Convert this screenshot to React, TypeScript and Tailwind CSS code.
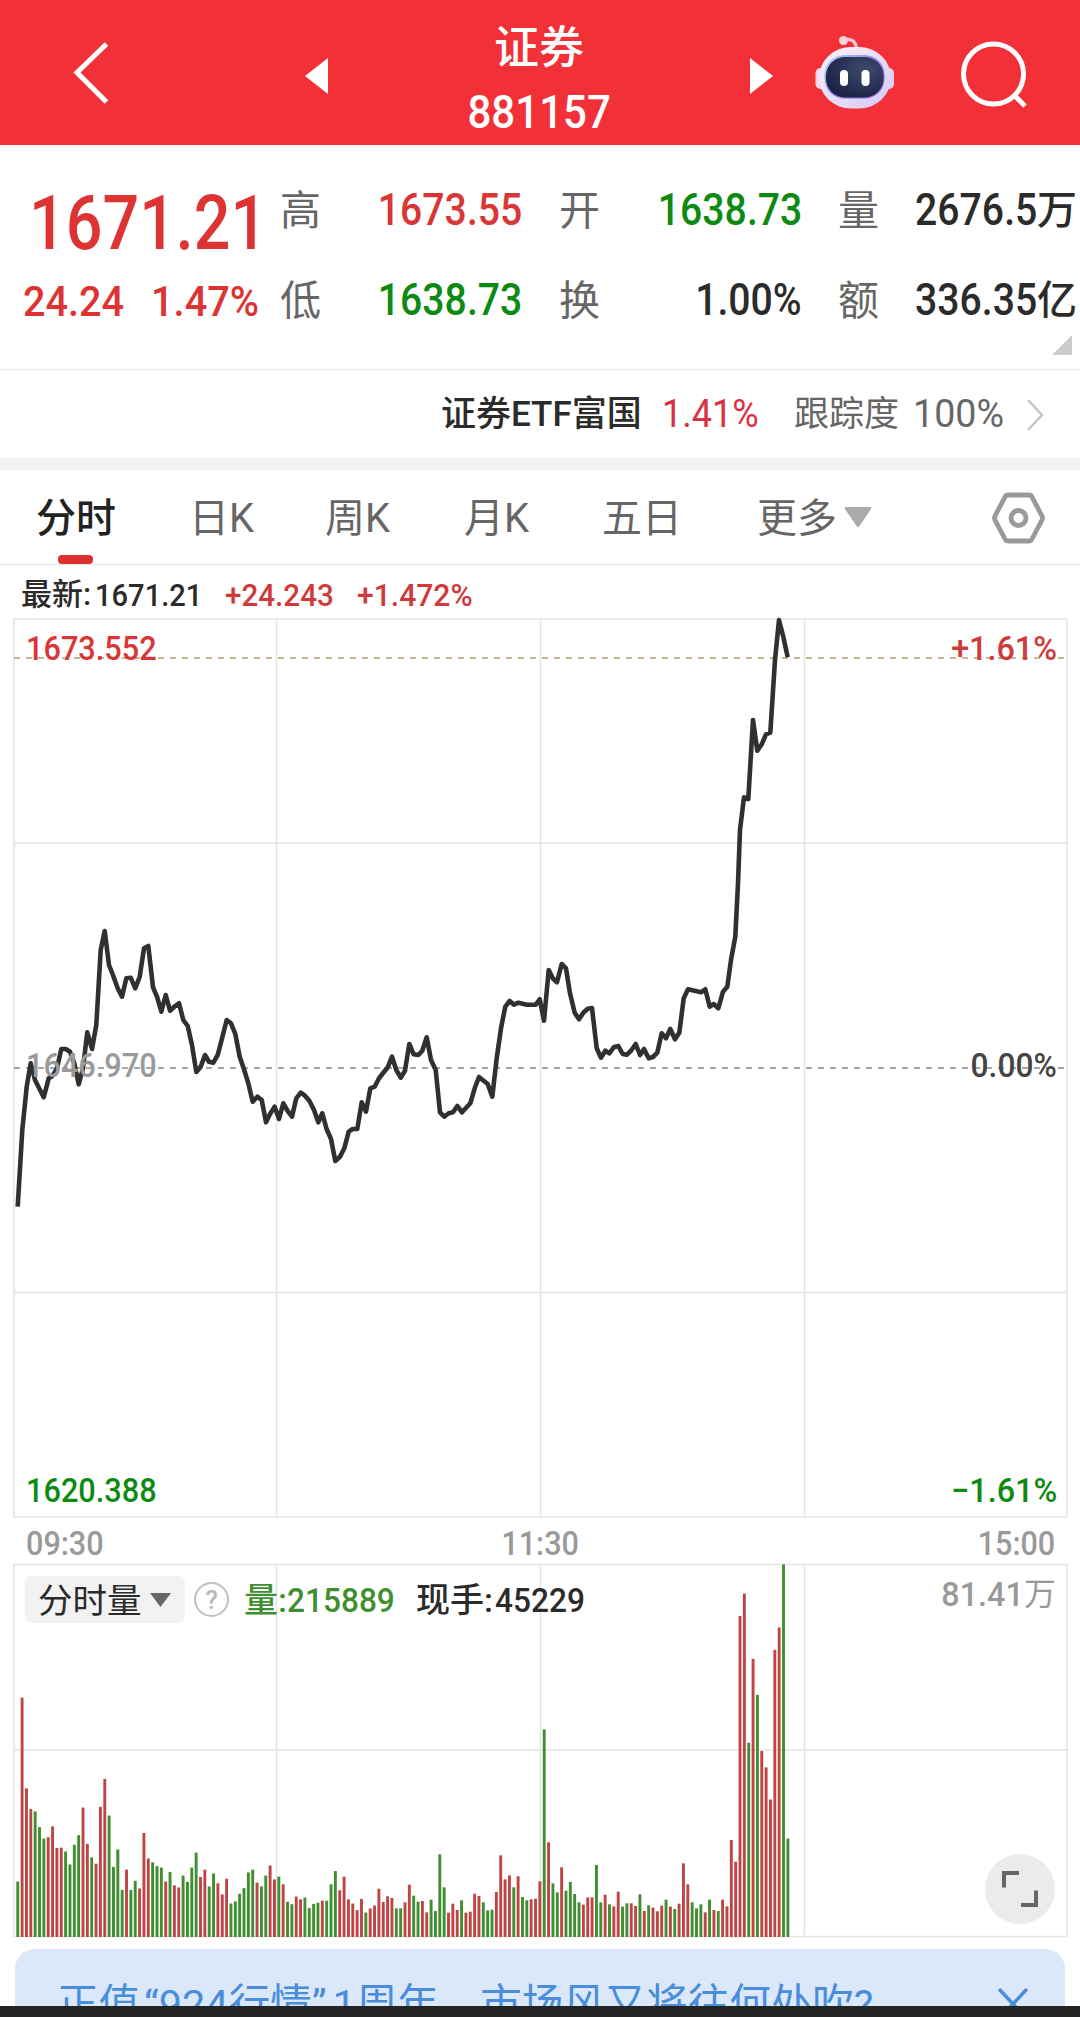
import type { ReactNode } from 'react';

const PRICE_POINTS =
  '17.7,1206.7 22.3,1130 26.7,1086.7 30.7,1063.3 35,1080 43.7,1097.3 48.7,1078.3 52.7,1075.7 57,1068.3 61.3,1049 65.7,1049 70,1051.7 74.3,1063.3 78.7,1084.3 83,1068.3 87.3,1032.3 92,1049 96.3,1025 100.7,950 104.7,931 109,965 113.3,976 117.7,988.3 122,996.7 126.3,978.3 130.7,977.7 135.3,988.3 139.7,976.7 144,948.3 148.3,946 153,987.3 157,996.7 161.3,1011.7 165.7,995 170,1010.7 174.3,1006.7 179,1003.3 183.3,1020 187.7,1026 192,1045 196.3,1072 200.7,1066.7 205,1055 209,1061.7 213.3,1062.7 217.7,1055 222.3,1037.3 226.7,1020 231,1023.3 235.3,1034 239.7,1056.7 244,1069.3 248.3,1083.3 252.7,1101.7 257.3,1096.7 261.7,1100 266,1122.3 270,1114 274.7,1106.7 279,1119 283.3,1103.3 287.7,1111 292,1116.7 296.3,1098.3 300.7,1092.7 305,1095.7 309.3,1100.7 314,1110 318.3,1122.3 322.3,1113.3 326.7,1129.3 331,1139 335.3,1161 340,1156.7 344.3,1148.3 348.7,1131.7 352.7,1129 357.3,1129 361.7,1102.3 366,1111.7 370.3,1088.3 374.7,1086.7 379,1078.3 387.7,1067.3 392,1056.7 396.3,1070 400.7,1077.7 405,1070.7 409.3,1044 413.7,1054.3 418.3,1055 422.3,1050.7 426.7,1037.3 431,1060 435.7,1070 440,1112.3 444.3,1116.7 448.7,1113.3 453,1112.3 457.3,1106 462,1112.3 470.3,1103.3 474.7,1088.3 479,1077 487.7,1084 492.3,1096.7 496.7,1058.3 501,1028.3 505.3,1006.7 509.7,1001 514,1004.7 518.3,1002.7 526.7,1004.7 535.7,1004.7 539.7,999.3 544,1020.7 548.7,970 552.7,978.3 557,982.3 561.7,964 566,968.3 570,993.3 574.7,1012.7 579,1019.3 583.3,1012.7 587.7,1008.7 592,1008 596.7,1048.3 601,1057.7 605.3,1050.7 609.3,1053.3 613.7,1047.3 618.3,1046 622.7,1054 626.7,1054.7 631,1050.7 635.7,1044 640,1055 644,1049 648.7,1058.3 653,1057 657.3,1052.7 661.7,1033.3 666,1038.3 670.3,1029 675,1039.3 679.3,1032.7 683.7,998.3 688,989.3 696.7,991.3 701,992.3 705.3,989.3 709.7,1006.7 713.7,1004 718.3,1008.3 723,991.7 727.3,986.7 731,960 735.3,936.7 738,883.3 740,830 744,797.3 748.3,799 753,720 757.3,750.7 761.7,744.3 766,734.3 770.3,732.7 775,660 779,620 783.3,636.7 787.7,657.3';

const VOLUME_RUNS = [
  {
    unit: 2.866,
    bars: 'g159 r686 r426 r367 g360 g315 g282 r286 r317 r255 r256 g245 g208 g264 g292 r371 r267 g228 r210 r373 r453 g348 g201 g251 g135 r193 g135 g161 r139 r298 r225 g214 g203 g199 r159 g186 r148 r142 g176 g158 g199 g242 r172 r193 g145 g182 r154 r122 r167 g96 g102 g124 g140 g185 g193 r156 g145 g176 r205 r165 g173 r151 g101 g94 r116 r108 g113 g83 g95 g98 r104 g104 g151 g189 r134 r173 r108 r96 r77 r109 g70 r82 r90 r138',
  },
  {
    unit: 3,
    bars: 'r105 r122 r117 g86 g86 r104 r157 g124 g106 r108 r74 g112 g78 g248 g149 r73 r100 r81 g110 r73 r76 r130 r123 g104 g80 g82 r135 r245 r173 r185 g149 r182 g120 g110 r113 r115 r167 g623 r284 g161 g134 r209 g139 g165 g129 g104 r97 r119 r119 g216 g104 r127 g98 r92 r136 g91 g101 r101 r93 g128 r78 g95 r88 r77 r94 g112 r91 g84 r100 r221 r158 g104 g86 g98 r74 g112 r81 g78 r112 r92 r291 r226',
  },
  {
    unit: 2.866,
    bars: 'r920 r984 g557 r797 g694 r533 r486 r394 r823 r887 g1068 g282',
  },
];

const BARS = VOLUME_RUNS.flatMap(({ unit, bars }) =>
  bars.split(' ').map((b) => ({ up: b[0] === 'r', height: Number(b.slice(1)) / unit })),
);

/* Condensed figures, anchored to one edge of their box */
function Num({ children, className = '' }: { children: ReactNode; className?: string }) {
  return <span className={`inline-block whitespace-nowrap ${className}`}>{children}</span>;
}

function Robot() {
  return (
    <svg className="h-[76px] w-[80px]" viewBox="0 0 80 76">
      <defs>
        <linearGradient id="shell" x1="0" y1="0" x2="1" y2="1">
          <stop offset="0" stopColor="#fff0f6" />
          <stop offset="0.55" stopColor="#e6dcf8" />
          <stop offset="1" stopColor="#d3c8f6" />
        </linearGradient>
        <linearGradient id="rim" x1="0" y1="0" x2="1" y2="1">
          <stop offset="0" stopColor="#a9dcf2" />
          <stop offset="0.5" stopColor="#8b7fe6" />
          <stop offset="1" stopColor="#8e5be0" />
        </linearGradient>
        <radialGradient id="visor" cx="0.68" cy="0.3" r="0.7">
          <stop offset="0" stopColor="#3f4a6d" />
          <stop offset="1" stopColor="#1d2547" />
        </radialGradient>
      </defs>
      <path d="M29 5 Q41 2 41.500 15" fill="none" stroke="#f8c6d6" strokeWidth="3.500" />
      <circle cx="28.500" cy="5.500" r="4.500" fill="#fbd3df" />
      <rect x="0.500" y="33" width="11" height="21" rx="5" fill="#f3d9ea" />
      <rect x="68" y="33" width="11" height="21" rx="5" fill="#dcd0f7" />
      <rect x="4" y="12" width="72" height="61.500" rx="32" fill="url(#shell)" />
      <rect x="9.500" y="20" width="60" height="43.500" rx="20" fill="url(#rim)" />
      <rect x="11" y="22" width="57.500" height="40.500" rx="19" fill="url(#visor)" />
      <rect x="25" y="35" width="8" height="16" rx="4" fill="#fff" />
      <rect x="46.500" y="35" width="8" height="16" rx="4" fill="#fff" />
    </svg>
  );
}

function Header() {
  return (
    <header className="flex h-[145px] w-full items-start bg-[#f13037] text-white">
      <svg className="ml-[70px] mt-[38px] h-[70px] w-[42px] shrink-0" viewBox="0 0 42 70" fill="none" stroke="#fff" strokeWidth="5">
        <path d="M36.500 6 L7 34.500 L36.500 64" />
      </svg>
      <svg className="ml-[193px] mt-[58px] h-[36px] w-[23px] shrink-0" viewBox="0 0 23 36">
        <path d="M23 0 V36 L0 18 Z" fill="#fff" />
      </svg>
      <div className="flex w-[422px] shrink-0 flex-col items-center">
        <div className="mt-[26px] text-[45px] font-medium leading-[45px]">证券</div>
        <Num className="mt-[17px] scale-x-[0.895] text-[47px] font-medium leading-[47px]">881157</Num>
      </div>
      <svg className="mt-[58px] h-[36px] w-[23px] shrink-0" viewBox="0 0 23 36">
        <path d="M0 0 L23 18 L0 36 Z" fill="#fff" />
      </svg>
      <div className="ml-[42px] mt-[35px] shrink-0">
        <Robot />
      </div>
      <svg className="ml-[62px] mt-[38px] h-[74px] w-[74px] shrink-0" viewBox="0 0 74 74" fill="none" stroke="#fff" strokeWidth="5">
        <circle cx="36.500" cy="36" r="30" />
        <path d="M57 57 L68 68" />
      </svg>
    </header>
  );
}

function Quote() {
  const label = 'text-[41px] leading-[48px] text-[#666] pt-[2px] whitespace-nowrap';
  const value = 'scale-x-[0.89] origin-right text-[44px] font-medium leading-[50px]';
  return (
    <section className="relative flex h-[225px] w-full border-b border-[#e9e9e9]">
      <div className="w-[280px] shrink-0 text-[#dd3333]">
        <Num className="ml-[29px] mt-[40px] origin-left scale-x-[0.85] text-[76px] font-medium leading-[76px]">1671.21</Num>
        <div className="flex pt-[16px]">
          <Num className="ml-[23px] w-[128px] origin-left scale-x-[0.92] text-[43px] font-medium leading-[48px]">24.24</Num>
          <Num className="origin-left scale-x-[0.925] text-[43px] font-medium leading-[48px]">1.47%</Num>
        </div>
      </div>
      <div className="grid h-[180px] w-[800px] shrink-0 grid-cols-[41px_201px_78px_202px_77px_198px] grid-rows-[90px_90px] pt-[40px]">
        <div className={label}>高</div>
        <div className="text-right text-[#d93636]"><Num className={value}>1673.55</Num></div>
        <div className={`${label} text-right`}>开</div>
        <div className="text-right text-[#0d8a12]"><Num className={value}>1638.73</Num></div>
        <div className={`${label} text-right`}>量</div>
        <div className="flex justify-end whitespace-nowrap text-[#2b2b2b]">
          <Num className={value}>2676.5</Num>
          <span className="text-[40px] font-medium leading-[52px]">万</span>
        </div>
        <div className={label}>低</div>
        <div className="text-right text-[#0d8a12]"><Num className={value}>1638.73</Num></div>
        <div className={`${label} text-right`}>换</div>
        <div className="text-right text-[#2b2b2b]"><Num className={value}>1.00%</Num></div>
        <div className={`${label} text-right`}>额</div>
        <div className="flex justify-end whitespace-nowrap text-[#2b2b2b]">
          <Num className={value}>336.35</Num>
          <span className="text-[40px] font-medium leading-[52px]">亿</span>
        </div>
      </div>
      <svg className="absolute bottom-[14px] right-[8px] h-[20px] w-[20px]" viewBox="0 0 20 20">
        <path d="M20 0 V20 H0 Z" fill="#ccc" />
      </svg>
    </section>
  );
}

function EtfRow() {
  return (
    <section className="flex h-[88px] w-full items-center pt-[2px] text-[35px] leading-[40px] text-[#666]">
      <span className="ml-[441px] w-[221px] whitespace-nowrap font-medium text-[#2b2b2b]">证券ETF富国</span>
      <span className="w-[132px]"><Num className="origin-left scale-x-[0.925] text-[39px] text-[#dc2f42]">1.41%</Num></span>
      <span className="w-[119px] whitespace-nowrap">跟踪度</span>
      <span className="w-[113px]"><Num className="origin-left scale-x-[0.965] text-[39px]">100%</Num></span>
      <svg className="h-[34px] w-[18px]" viewBox="0 0 18 34" fill="none" stroke="#c4c4c4" strokeWidth="2.500">
        <path d="M2 2 L16 17 L2 32" />
      </svg>
    </section>
  );
}

function Tabs() {
  return (
    <nav className="relative flex h-[95px] w-full items-center whitespace-nowrap border-b border-[#e2e2e2] text-[40px] leading-[48px] text-[#666]">
      <span className="ml-[36px] w-[153px] pt-[4px] font-medium text-[#222]">分时</span>
      <span className="w-[136px] pt-[4px]">日K</span>
      <span className="w-[139px] pt-[4px]">周K</span>
      <span className="w-[138px] pt-[4px]">月K</span>
      <span className="w-[155px] pt-[4px]">五日</span>
      <span className="w-[87px] pt-[4px]">更多</span>
      <svg className="h-[22px] w-[28px]" viewBox="0 0 28 22">
        <path d="M2 1 H26 Q28 1 27 3 L15.500 20 Q14 22 12.500 20 L1 3 Q0 1 2 1 Z" fill="#aaa" />
      </svg>
      <svg className="ml-[118px] mt-[2px] h-[54px] w-[58px]" viewBox="0 0 58 54" fill="none" stroke="#999" strokeWidth="4.800" strokeLinejoin="round">
        <path d="M18 4 H39 Q41 4 42 6 L52 25 Q53 27 52 29 L42 48 Q41 50 39 50 H18 Q16 50 15 48 L5 29 Q4 27 5 25 L15 6 Q16 4 18 4 Z" />
        <circle cx="28.500" cy="27" r="7.500" />
      </svg>
      <div className="absolute bottom-0 left-[58px] h-[9px] w-[35px] rounded-[4px] bg-[#dd3030]" />
    </nav>
  );
}

function PriceChart() {
  const tag = 'absolute text-[33px] font-medium leading-[34px]';
  return (
    <section className="relative h-[952px] w-full">
      <div className="flex h-[54px] items-center pt-[5px] text-[32px] font-medium leading-[34px] text-[#2b2b2b]">
        <span className="ml-[21px] w-[74px] whitespace-nowrap text-[31px]">最新:</span>
        <span className="w-[130px]"><Num className="origin-left scale-x-[0.91]">1671.21</Num></span>
        <span className="w-[132px]"><Num className="origin-left scale-x-[0.925] text-[#d03a3a]">+24.243</Num></span>
        <Num className="origin-left scale-x-[0.94] text-[#d03a3a]">+1.472%</Num>
      </div>
      <svg className="block h-[898px] w-full overflow-visible" viewBox="0 619 1080 898" fill="none">
        <g stroke="#e4e4e4" strokeWidth="1.500">
          <rect x="14" y="619" width="1053" height="898" />
          <path d="M276.500 619 V1517 M540.500 619 V1517 M804.500 619 V1517 M14 843 H1067 M14 1292.500 H1067" />
        </g>
        <path d="M14 1068 H1064" stroke="#8a8a8a" strokeWidth="1.700" strokeDasharray="6 6" />
        <path d="M14 658 H1064" stroke="#b3a368" strokeWidth="1.700" strokeDasharray="6 6" />
        <polyline points={PRICE_POINTS} stroke="#303030" strokeWidth="4.600" strokeLinejoin="round" />
      </svg>
      <Num className={`${tag} left-[26px] top-[67px] origin-left scale-x-[0.93] text-[#d93636]`}>1673.552</Num>
      <Num className={`${tag} right-[23px] top-[67px] origin-right scale-x-[0.98] text-[#d03a3a]`}>+1.61%</Num>
      <Num className={`${tag} left-[26px] top-[484px] origin-left scale-x-[0.93] text-[#999]`}>1646.970</Num>
      <Num className={`${tag} right-[23px] top-[484px] origin-right scale-x-[0.96] text-[#444]`}>0.00%</Num>
      <Num className={`${tag} left-[26px] top-[909px] origin-left scale-x-[0.93] text-[#0d8a12]`}>1620.388</Num>
      <Num className={`${tag} right-[23px] top-[909px] origin-right scale-x-[0.98] text-[#0d8a12]`}>−1.61%</Num>
    </section>
  );
}

function TimeAxis() {
  return (
    <div className="flex h-[47px] items-center justify-between pl-[26px] pr-[25px] pt-[5px] text-[34px] font-medium leading-[34px] text-[#999]">
      <Num className="origin-left scale-x-[0.9]">09:30</Num>
      <Num className="scale-x-[0.9]">11:30</Num>
      <Num className="origin-right scale-x-[0.9]">15:00</Num>
    </div>
  );
}

function VolumeChart() {
  return (
    <section className="relative h-[373px] w-full">
      <svg className="block h-[373px] w-full overflow-visible" viewBox="0 1564 1080 373" fill="none">
        <g stroke="#e4e4e4" strokeWidth="1.500">
          <rect x="14" y="1564.500" width="1053" height="372" />
          <path d="M276.500 1564 V1936 M540.500 1564 V1936 M804.500 1564 V1936 M14 1750 H1067" />
        </g>
        {BARS.map((bar, i) => (
          <rect key={i} x={16.3 + i * 4.351} y={1937 - bar.height} width="2.900" height={bar.height} fill={bar.up ? '#bf4545' : '#3f8f30'} />
        ))}
      </svg>
      <div className="absolute left-[25px] top-[12px] flex h-[47px] items-center text-[34px] leading-[36px]">
        <div className="flex h-[47px] w-[160px] shrink-0 items-center rounded-[6px] bg-[#f2f2f2] pl-[13px] text-[#2b2b2b]">
          <span className="w-[112px] whitespace-nowrap pt-[2px] text-[34.5px]">分时量</span>
          <svg className="h-[14px] w-[21px]" viewBox="0 0 21 14"><path d="M0 0 H21 L10.500 14 Z" fill="#666" /></svg>
        </div>
        <div className="ml-[9px] flex h-[35px] w-[35px] shrink-0 items-center justify-center rounded-full border-[2.5px] border-[#c0c0c0] text-[26px] font-medium leading-[26px] text-[#b8b8b8]">?</div>
        <span className="ml-[15px] w-[43px] shrink-0 whitespace-nowrap font-medium text-[#3f8f30]">量:</span>
        <span className="w-[129px] shrink-0"><Num className="origin-left scale-x-[0.93] text-[34px] font-medium text-[#3f8f30]">215889</Num></span>
        <span className="w-[79px] shrink-0 whitespace-nowrap font-medium text-[#2b2b2b]">现手:</span>
        <Num className="origin-left scale-x-[0.93] text-[34px] font-medium text-[#2b2b2b]">45229</Num>
      </div>
      <div className="absolute right-[24px] top-[12px] flex text-[34px] leading-[36px] text-[#999]">
        <Num className="origin-right scale-x-[0.95] font-medium">81.41</Num>
        <span className="text-[32px]">万</span>
      </div>
      <div className="absolute left-[985px] top-[290px] flex h-[70px] w-[70px] items-center justify-center rounded-full bg-[#ebebeb]">
        <svg className="h-[36px] w-[36px]" viewBox="0 0 36 36" fill="none" stroke="#666" strokeWidth="4">
          <path d="M2 16.500 V2 H17 M34 19.500 V34 H19" />
        </svg>
      </div>
    </section>
  );
}

function Banner() {
  return (
    <div className="mt-[12px] flex h-[57px] w-full overflow-hidden px-[15px]">
      <div className="flex h-[100px] w-[1050px] rounded-t-[20px] bg-[#dbe8fa] pt-[33px] text-[41.5px] leading-[46px] text-[#4a8ddb]">
        <div className="ml-[42px] w-[941px] whitespace-nowrap">
          正值<span className="ml-[4px] mr-[6px]">“924行情”</span>1周年，市场风又将往何处吹?
        </div>
        <svg className="mt-[6px] h-[32px] w-[30px]" viewBox="0 0 30 32" fill="none" stroke="#4a8ddb" strokeWidth="3.500">
          <path d="M1 1 L29 31 M29 1 L1 31" />
        </svg>
      </div>
    </div>
  );
}

export default function App() {
  return (
    <main className="flex h-[2017px] w-[1080px] flex-col overflow-hidden bg-white font-['Roboto','Noto_Sans_CJK_SC',sans-serif]" lang="zh-CN">
      <Header />
      <Quote />
      <EtfRow />
      <div className="h-[12px] w-full shrink-0 bg-[#f3f3f3]" />
      <Tabs />
      <PriceChart />
      <TimeAxis />
      <VolumeChart />
      <Banner />
      <div className="h-[11px] w-full shrink-0 bg-[#242424]" />
    </main>
  );
}
